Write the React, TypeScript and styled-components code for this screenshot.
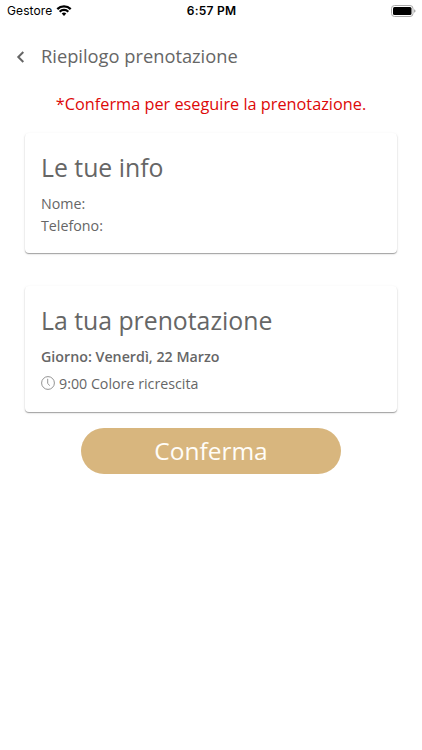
import React from "react";
import styled, { createGlobalStyle } from "styled-components";

const GlobalStyle = createGlobalStyle`
  * { box-sizing: border-box; }
  body { margin: 0; background: #fff; font-family: "Open Sans", sans-serif; color: #666; }
`;
const Screen = styled.main`
  width: 422px; height: 750px; display: flex; flex-direction: column; background: #fff; overflow: hidden;
`;
const StatusBar = styled.div`
  display: grid; grid-template-columns: 1fr auto 1fr; align-items: center;
  height: 21px; padding: 0 6px 0 7px; font-family: Inter, sans-serif; font-size: 12px; color: #000;
`;
const Carrier = styled.div`display: flex; align-items: center; gap: 4px; letter-spacing: 0.1px;`;
const Time = styled.div`font-weight: 600; letter-spacing: 0.25px;`;
const Battery = styled.svg`justify-self: end;`;
const Header = styled.header`
  display: flex; align-items: center; height: 71px; padding-left: 15px; gap: 15px;
`;
const Title = styled.h1`margin: 0 0 2px; font-size: 18.3px; line-height: 25px; font-weight: 400;`;
const Notice = styled.p`
  margin: 0; height: 41px; line-height: 25px; text-align: center; font-size: 16.3px; color: #dd0808;
`;
const Card = styled.section<{ $height: number }>`
  height: ${(p) => p.$height}px; margin: 0 25px; padding: 16px; border-radius: 4px; background: #fff;
  box-shadow: 0 1px 1px rgba(0,0,0,.32), 0 1px 3px rgba(0,0,0,.1);
`;
const CardTitle = styled.h2`margin: 0 0 8px; font-size: 24.8px; line-height: 36px; font-weight: 400;`;
const Line = styled.div<{ $bold?: boolean }>`
  display: flex; align-items: center; gap: 4px; font-size: 14.25px; line-height: 22px; font-weight: ${(p) => (p.$bold ? 600 : 400)};
`;
const Slot = styled(Line)`
  margin-top: 5px;
  svg { margin-bottom: 2px; }
`;
const Gap = styled.div`height: 33px; flex: none;`;
const Confirm = styled.button`
  width: 260px; height: 46px; margin: 16px auto 0; padding: 0 0 2px; border: 0; border-radius: 23px;
  background: #d8b67e; color: #fffdf8; font: 400 24.5px "Open Sans", sans-serif;
`;

export default function App() {
  return (
    <Screen>
      <GlobalStyle />
      <StatusBar>
        <Carrier>Gestore
          <svg width="16" height="11" viewBox="0 0 15 11" fill="none" stroke="#000" strokeWidth="2.3">
            <path d="M.8 4.1a9.6 9.6 0 0 1 13.4 0M3.2 6.7a6.1 6.1 0 0 1 8.6 0" />
            <path d="M7.5 11 5.2 8.6a3.3 3.3 0 0 1 4.6 0z" fill="#000" stroke="none" />
          </svg>
        </Carrier>
        <Time>6:57 PM</Time>
        <Battery width="25" height="12" viewBox="0 0 25 12">
          <rect x=".5" y=".5" width="21.5" height="11" rx="3" fill="none" stroke="#aaa" />
          <rect x="2" y="2" width="18.5" height="8" rx="1.5" />
          <path d="M23.2 4.2q1.3.5 1.3 1.8t-1.3 1.8z" fill="#999" />
        </Battery>
      </StatusBar>
      <Header>
        <svg width="11" height="14" viewBox="0 0 11 14" fill="none" stroke="#666" strokeWidth="2"><path d="M8.3 2 3.3 7l5 5" /></svg>
        <Title>Riepilogo prenotazione</Title>
      </Header>
      <Notice>*Conferma per eseguire la prenotazione.</Notice>
      <Card $height={120}>
        <CardTitle>Le tue info</CardTitle>
        <Line>Nome:</Line>
        <Line>Telefono:</Line>
      </Card>
      <Gap />
      <Card $height={126}>
        <CardTitle>La tua prenotazione</CardTitle>
        <Line $bold>Giorno: Venerdì, 22 Marzo</Line>
        <Slot>
          <svg width="14" height="14" viewBox="0 0 14 14" fill="none" stroke="#777" strokeWidth=".8"><circle cx="7" cy="7" r="6.4" /><path d="M6.7 2.8V7.5L8.8 9.6" /></svg>
          9:00 Colore ricrescita
        </Slot>
      </Card>
      <Confirm>Conferma</Confirm>
    </Screen>
  );
}
